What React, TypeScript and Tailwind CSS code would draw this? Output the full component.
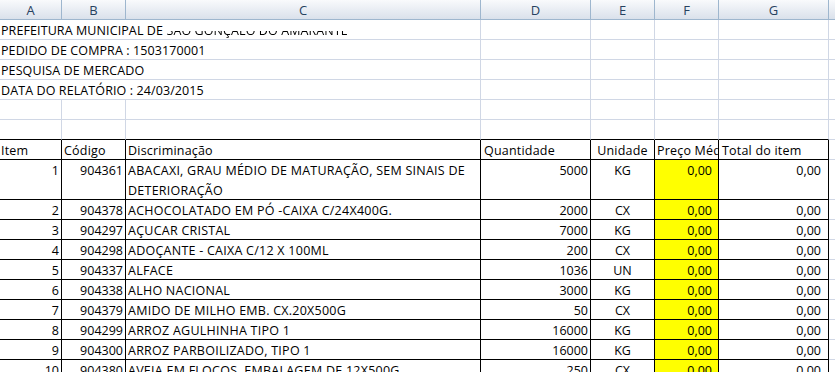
import React from "react";

const rows = [
  { i: "1", c: "904361", d: ["ABACAXI, GRAU MÉDIO DE MATURAÇÃO, SEM SINAIS DE", "DETERIORAÇÃO"], q: "5000", u: "KG" },
  { i: "2", c: "904378", d: ["ACHOCOLATADO EM PÓ -CAIXA C/24X400G."], q: "2000", u: "CX" },
  { i: "3", c: "904297", d: ["AÇUCAR CRISTAL"], q: "7000", u: "KG" },
  { i: "4", c: "904298", d: ["ADOÇANTE - CAIXA C/12 X 100ML"], q: "200", u: "CX" },
  { i: "5", c: "904337", d: ["ALFACE"], q: "1036", u: "UN" },
  { i: "6", c: "904338", d: ["ALHO NACIONAL"], q: "3000", u: "KG" },
  { i: "7", c: "904379", d: ["AMIDO DE MILHO EMB. CX.20X500G"], q: "50", u: "CX" },
  { i: "8", c: "904299", d: ["ARROZ AGULHINHA TIPO 1"], q: "16000", u: "KG" },
  { i: "9", c: "904300", d: ["ARROZ PARBOILIZADO, TIPO 1"], q: "16000", u: "KG" },
  { i: "10", c: "904380", d: ["AVEIA EM FLOCOS, EMBALAGEM DE 12X500G"], q: "250", u: "CX" },
];

const g = "border-r border-b border-[#d0d7e5]";
const cell = "shrink-0 overflow-hidden whitespace-nowrap pt-[1px] leading-[20px]";

function ColHeaders() {
  const hc =
    "shrink-0 border-r border-[#9eb6ce] text-center leading-[19px] pt-[1px] text-[#27415f] text-[13px]";
  return (
    <div className="flex h-[20px] border-b border-[#9eb6ce] bg-gradient-to-b from-[#f9fafc] to-[#dae1eb]">
      <div className={`${hc} w-[62px]`}>A</div>
      <div className={`${hc} w-[64px]`}>B</div>
      <div className={`${hc} w-[355px]`}>C</div>
      <div className={`${hc} w-[110px]`}>D</div>
      <div className={`${hc} w-[64px]`}>E</div>
      <div className={`${hc} w-[64px]`}>F</div>
      <div className={`${hc} w-[110px]`}>G</div>
      <div className="flex-1" />
    </div>
  );
}

function TextRow({ children }: { children?: React.ReactNode }) {
  return (
    <div className="flex h-[20px]">
      <div className={`${cell} ${g} w-[481px] pl-[1px] overflow-visible tracking-[0.1px]`}>{children}</div>
      <div className={`${cell} ${g} w-[110px]`} />
      <div className={`${cell} ${g} w-[64px]`} />
      <div className={`${cell} ${g} w-[64px]`} />
      <div className={`${cell} ${g} w-[110px]`} />
      <div className="flex-1 border-b border-[#d0d7e5]" />
    </div>
  );
}

function EmptyRow({ last }: { last?: boolean }) {
  const b = last ? "border-r border-b border-r-[#d0d7e5] border-b-black" : g;
  return (
    <div className="flex h-[20px]">
      <div className={`${cell} ${b} w-[62px]`} />
      <div className={`${cell} ${b} w-[64px]`} />
      <div className={`${cell} ${b} w-[355px]`} />
      <div className={`${cell} ${b} w-[110px]`} />
      <div className={`${cell} ${b} w-[64px]`} />
      <div className={`${cell} ${b} w-[64px]`} />
      <div className={`${cell} ${b} w-[110px]`} />
      <div className="flex-1 border-b border-[#d0d7e5]" />
    </div>
  );
}

const k = "border-r border-b border-black";

function TableHeader() {
  return (
    <div className="flex h-[20px] tracking-[0.2px]">
      <div className={`${cell} ${k} w-[62px] pl-[1px]`}>Item</div>
      <div className={`${cell} ${k} w-[64px] pl-[2px]`}>Código</div>
      <div className={`${cell} ${k} w-[355px] pl-[2px]`}>Discriminação</div>
      <div className={`${cell} ${k} w-[110px] pl-[3px]`}>Quantidade</div>
      <div className={`${cell} ${k} w-[64px] text-center`}>Unidade</div>
      <div className={`${cell} ${k} w-[64px] pl-[2px]`}>Preço Médio</div>
      <div className={`${cell} ${k} w-[110px] pl-[3px]`}>Total do item</div>
      <div className="flex-1 border-b border-[#d0d7e5]" />
    </div>
  );
}

function DataRow({ r }: { r: (typeof rows)[number] }) {
  const h = r.d.length > 1 ? "h-[40px]" : "h-[20px]";
  return (
    <div className={`flex ${h}`}>
      <div className={`${cell} ${k} w-[62px] text-right pr-[2px]`}>{r.i}</div>
      <div className={`${cell} ${k} w-[64px] text-right pr-[2px]`}>{r.c}</div>
      <div className={`${cell} ${k} w-[355px] pl-[2px] tracking-[0.25px]`}>
        {r.d.map((line, idx) => (
          <div key={idx}>{line}</div>
        ))}
      </div>
      <div className={`${cell} ${k} w-[110px] text-right pr-[2px]`}>{r.q}</div>
      <div className={`${cell} ${k} w-[64px] text-center`}>{r.u}</div>
      <div className={`${cell} ${k} w-[64px] bg-[#ffff00] text-right pr-[6px]`}>0,00</div>
      <div className={`${cell} ${k} w-[110px] text-right pr-[7px]`}>0,00</div>
      <div className="flex-1 border-b border-[#d0d7e5]" />
    </div>
  );
}

export default function App() {
  return (
    <div className="w-[835px] h-[372px] overflow-hidden bg-white text-black font-['Open_Sans',sans-serif] font-medium text-[12.5px]">
      <ColHeaders />
      <TextRow>
        PREFEITURA MUNICIPAL DE{" "}
        <span className="inline-block align-top leading-[20px] bg-[linear-gradient(to_bottom,#ffffff_10px,#000000_10px)] bg-clip-text text-transparent">
          SÃO GONÇALO DO AMARANTE
        </span>
      </TextRow>
      <TextRow>PEDIDO DE COMPRA : 1503170001</TextRow>
      <TextRow>PESQUISA DE MERCADO</TextRow>
      <TextRow>DATA DO RELATÓRIO : 24/03/2015</TextRow>
      <EmptyRow />
      <EmptyRow last />
      <TableHeader />
      {rows.map((r) => (
        <DataRow key={r.i} r={r} />
      ))}
    </div>
  );
}
